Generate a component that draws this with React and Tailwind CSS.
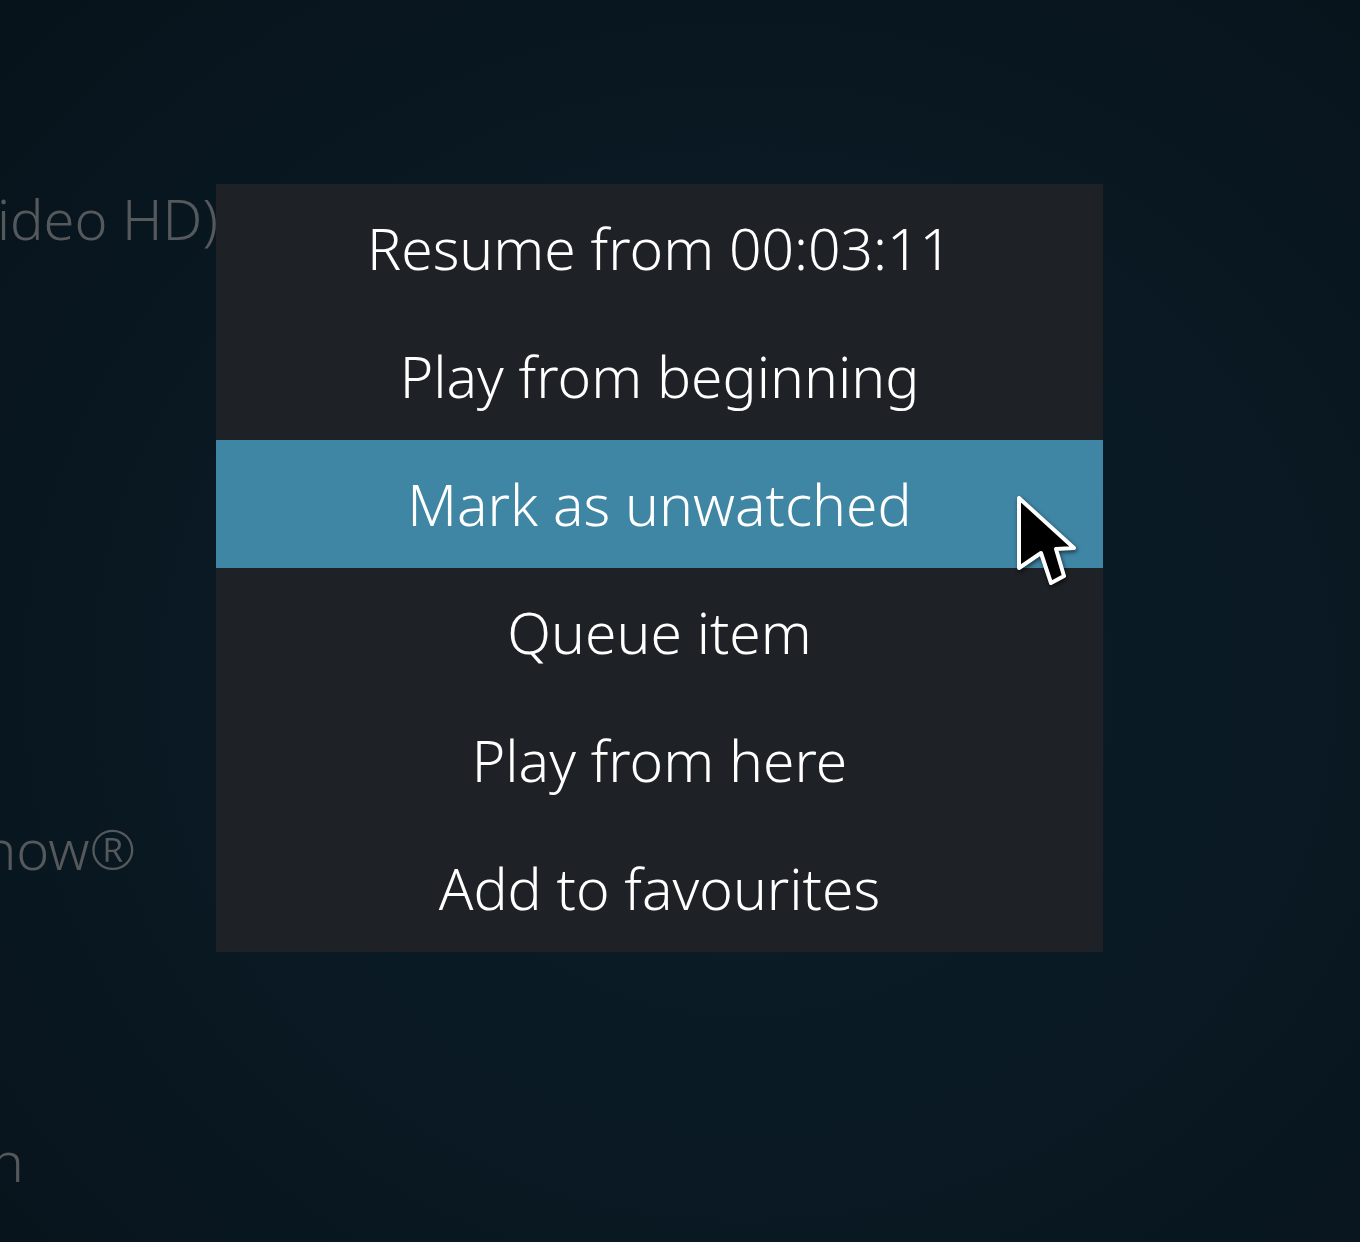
import React from "react";

const items = [
  "Resume from 00:03:11",
  "Play from beginning",
  "Mark as unwatched",
  "Queue item",
  "Play from here",
  "Add to favourites",
];

export default function App() {
  return (
    <div
      className="relative w-[1360px] h-[1242px] overflow-hidden bg-[radial-gradient(ellipse_at_55%_55%,#0d1f2a_0%,#0a1a24_40%,#07131b_100%)]"
      style={{ fontFamily: '"Noto Sans", "Open Sans", sans-serif' }}
    >
      {/* background list */}
      <div className="flex flex-col text-[56px] font-light leading-none text-[#55595c]">
        <div className="h-[238px] flex items-end justify-end w-[218px] whitespace-nowrap">
          <span className="translate-y-[8px]">Sintel (Video HD)</span>
        </div>
        <div className="h-[630px] flex items-end justify-end w-[136px] whitespace-nowrap">
          <span className="translate-y-[8px]">Tears of Steel Show®</span>
        </div>
        <div className="h-[312px] flex items-end justify-end w-[24px] whitespace-nowrap">
          <span className="translate-y-[8px]">Elephants Dream Edition</span>
        </div>
      </div>

      {/* context menu */}
      <div className="absolute left-[216px] top-[184px] w-[887px] bg-[#1e2125] flex flex-col">
        {items.map((t, i) => (
          <div
            key={t}
            className={
              "h-[128px] flex items-center justify-center text-[57px] font-[360] text-white whitespace-nowrap " +
              (i === 2 ? "bg-[#3f86a5]" : "")
            }
          >
            <span className="translate-y-[1px]">{t}</span>
          </div>
        ))}
      </div>

      {/* mouse cursor */}
      <svg
        className="absolute left-[1015px] top-[494px]"
        width="70"
        height="100"
        viewBox="0 0 70 100"
        style={{ filter: "drop-shadow(1px 2px 2px rgba(0,0,0,0.6))" }}
      >
        <path
          d="M4 4 L4 74 L26 59 L36 89 L49 82 L41 55 L59 54 Z"
          fill="#000"
          stroke="#fff"
          strokeWidth="4"
          strokeLinejoin="round"
        />
      </svg>
    </div>
  );
}
